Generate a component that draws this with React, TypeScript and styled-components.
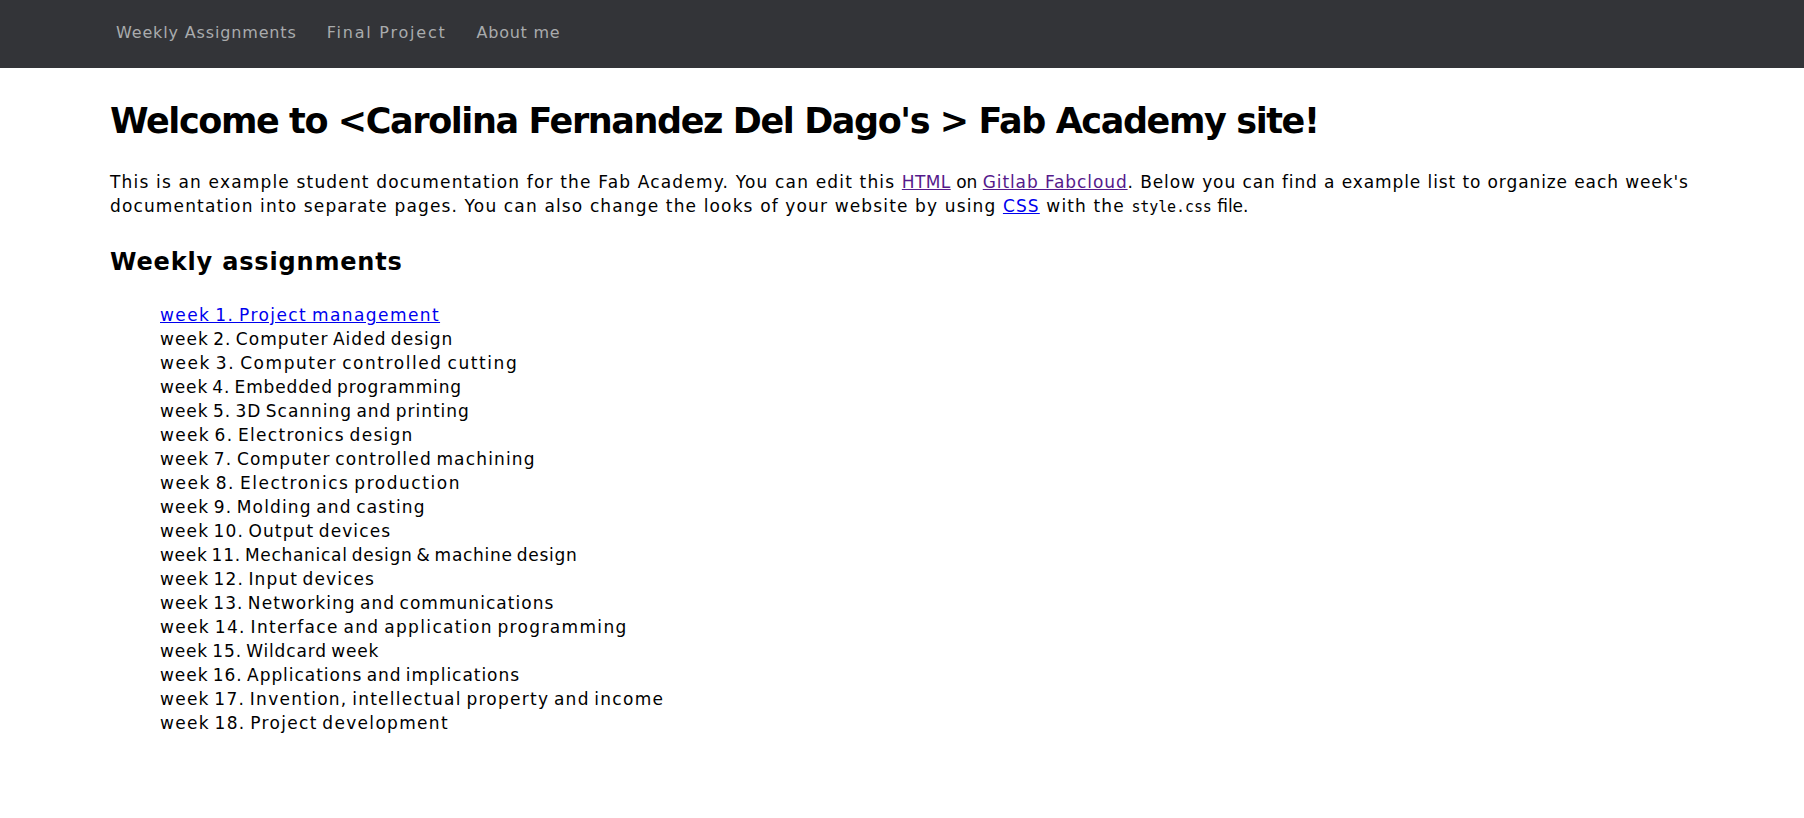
import React from "react";
import styled, { createGlobalStyle } from "styled-components";

const Global = createGlobalStyle`
  html, body { margin: 0; padding: 0; background: #fff; }
  body { font-family: "DejaVu Sans", sans-serif; font-size: 17px; line-height: 24px; color: #000; }
`;

const NavBar = styled.nav`
  height: 68px;
  background: #333438;
  padding: 0 110px 2px;
  display: flex;
  align-items: center;
  box-sizing: border-box;
`;
const NavLink = styled.a<{ $track: number }>`
  color: #a9abad;
  font-size: 16px;
  padding: 0 6px;
  margin-right: 18px;
  letter-spacing: ${(p) => p.$track}px;
  text-decoration: none;
`;
const Main = styled.main`
  padding: 0 110px;
`;
const Title = styled.h1`
  margin: 0;
  padding-top: 32px;
  font-size: 35px;
  line-height: 43px;
  font-weight: 700;
  letter-spacing: -1.4px;
`;
const Intro = styled.p`
  margin: 27px 0 0;
`;
const Run = styled.span<{ $track: number }>`
  letter-spacing: ${(p) => p.$track}px;
`;
const Link = styled.a<{ $visited?: boolean }>`
  color: ${(p) => (p.$visited ? "#551a8b" : "#0000ee")};
  text-decoration: underline;
`;
const Code = styled.code`
  font-family: "DejaVu Sans Mono", monospace;
  font-size: 15px;
  letter-spacing: -0.1px;
`;
const Heading = styled.h2`
  margin: 25px 0 0;
  font-size: 24px;
  line-height: 36px;
  font-weight: 700;
  letter-spacing: 0.83px;
`;
const Weeks = styled.ul`
  list-style: none;
  margin: 23px 0 0;
  padding: 0 0 0 50px;
`;
const Week = styled.li<{ $track: number }>`
  letter-spacing: ${(p) => p.$track}px;
  word-spacing: -2px;
`;

const weeks: [string, number][] = [
  ["week 2. Computer Aided design", 1.02],
  ["week 3. Computer controlled cutting", 1.56],
  ["week 4. Embedded programming", 0.86],
  ["week 5. 3D Scanning and printing", 0.98],
  ["week 6. Electronics design", 1.29],
  ["week 7. Computer controlled machining", 1.16],
  ["week 8. Electronics production", 1.53],
  ["week 9. Molding and casting", 1.14],
  ["week 10. Output devices", 1.11],
  ["week 11. Mechanical design & machine design", 0.71],
  ["week 12. Input devices", 1.11],
  ["week 13. Networking and communications", 1.04],
  ["week 14. Interface and application programming", 1.34],
  ["week 15. Wildcard week", 0.85],
  ["week 16. Applications and implications", 0.95],
  ["week 17. Invention, intellectual property and income", 1.26],
  ["week 18. Project development", 1.31],
];

export default function App() {
  return (
    <>
      <Global />
      <NavBar>
        <NavLink href="#" $track={0.85}>Weekly Assignments</NavLink>
        <NavLink href="#" $track={1.78}>Final Project</NavLink>
        <NavLink href="#" $track={0.75}>About me</NavLink>
      </NavBar>
      <Main>
        <Title>Welcome to &lt;Carolina Fernandez Del Dago's &gt; Fab Academy site!</Title>
        <Intro>
          <Run $track={1.17}>This is an example student documentation for the Fab Academy. You can edit this </Run>
          <Run $track={0.4}><Link href="#" $visited>HTML</Link></Run>
          <Run $track={0}> on </Run>
          <Run $track={0.9}>
            <Link href="#" $visited>Gitlab Fabcloud</Link>. Below you can find a example list to organize each week's{" "}
          </Run>
          <Run $track={1.14}>
            documentation into separate pages. You can also change the looks of your website by using{" "}
            <Link href="#">CSS</Link> with the{" "}
          </Run>
          <Code>style.css</Code>
          <Run $track={0}> file.</Run>
        </Intro>
        <Heading>Weekly assignments</Heading>
        <Weeks>
          <Week $track={1.42}><Link href="#">week 1. Project management</Link></Week>
          {weeks.map(([w, t]) => <Week key={w} $track={t}>{w}</Week>)}
        </Weeks>
      </Main>
    </>
  );
}
